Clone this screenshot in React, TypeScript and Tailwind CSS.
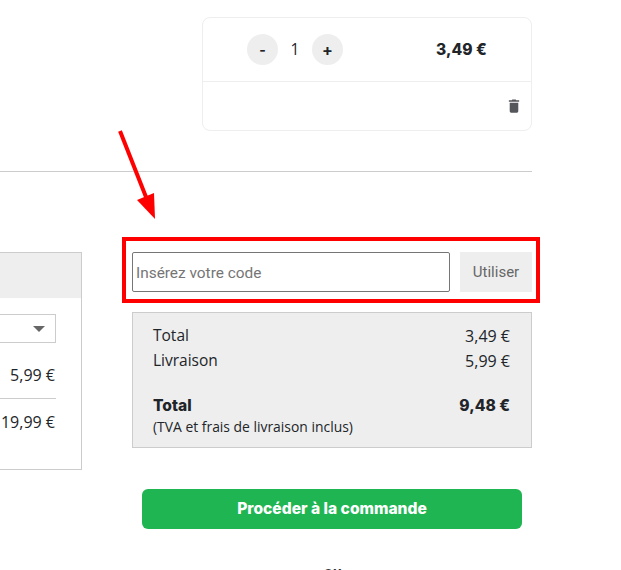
import React from 'react';

const App: React.FC = () => {
  return (
    <div className="relative w-[621px] h-[570px] overflow-hidden bg-white font-['Open_Sans',sans-serif] text-[#212529]">
      <div className="w-[532px] pt-[17px]">
        {/* cart item */}
        <div className="ml-[202px] w-[330px] h-[114px] border border-[#eeeeee] rounded-lg flex flex-col">
          <div className="h-[64px] border-b border-[#eeeeee] flex items-center pl-[44px]">
            <button className="w-[31px] h-[31px] rounded-full bg-[#eeeeee] flex items-center justify-center text-sm font-bold font-['Inter',sans-serif]">-</button>
            <span className="w-[34px] text-center text-[15.5px]">1</span>
            <button className="w-[31px] h-[31px] rounded-full bg-[#eeeeee] flex items-center justify-center text-base font-bold font-['Inter',sans-serif]">+</button>
            <span className="ml-[93px] text-[15.6px] font-extrabold font-['Inter',sans-serif]">3,49 €</span>
          </div>
          <div className="flex-1 flex justify-end pt-[17px] pr-[11px]">
            <svg width="12" height="14" viewBox="0 0 14 16" preserveAspectRatio="none" className="text-[#55565b]">
              <path fill="currentColor" d="M5 0.5h4l.7 1H13v1.6H1V1.5h3.3zM2 4.2h10V14a1.6 1.6 0 0 1-1.6 1.6H3.6A1.6 1.6 0 0 1 2 14z" />
            </svg>
          </div>
        </div>

        <div className="mt-[40px] border-t border-[#cccccc]" />

        <div className="mt-[80px] flex items-start">
          {/* shipping panel, cut off by the window */}
          <div className="w-[82px] h-[218px] border border-l-0 border-[#cccccc] text-base">
            <div className="h-[45px] bg-[#eeeeee]" />
            <div className="pr-[25px]">
              <div className="mt-[16px] h-[29px] border border-l-0 border-[#cccccc] flex items-center justify-end pr-[10px]">
                <span className="border-x-[6px] border-x-transparent border-t-[6px] border-t-[#666666]" />
              </div>
              <div className="h-[56px] border-b border-[#cccccc] pt-[21px] pr-px text-right leading-[22px]">5,99 €</div>
              <div className="pt-[12px] pr-px text-right leading-[22px] whitespace-nowrap">19,99 €</div>
            </div>
          </div>

          {/* coupon + totals */}
          <div className="ml-[50px] w-[400px]">
            <div className="flex gap-[10px]">
              <input
                readOnly
                placeholder="Insérez votre code"
                className="w-[318px] h-[40px] border border-[#767676] rounded-[2px] px-[3px] pt-[1px] text-[15.4px] font-['Roboto',sans-serif] placeholder:text-[#757575] outline-none"
              />
              <button className="w-[72px] h-[40px] bg-[#eeeeee] text-[15px] text-[#666666] font-['Roboto',sans-serif]">Utiliser</button>
            </div>

            <div className="mt-[20px] h-[136px] border border-[#cccccc] bg-[#eeeeee] pl-[20px] pr-[21px] pt-[10px] text-[15.5px]">
              <div className="flex justify-between h-[25px] items-center"><span>Total</span><span className="text-base">3,49 €</span></div>
              <div className="flex justify-between h-[25px] items-center"><span>Livraison</span><span className="text-base">5,99 €</span></div>
              <div className="mt-[20px] flex justify-between h-[25px] items-center font-['Inter',sans-serif] font-extrabold text-[15.6px]"><span>Total</span><span>9,48 €</span></div>
              <div className="text-[13.9px] leading-[18px]">(TVA et frais de livraison inclus)</div>
            </div>

            <button className="mt-[41px] ml-[10px] w-[380px] h-[40px] rounded-md bg-[#1fb553] text-white text-[15.6px] font-extrabold font-['Inter',sans-serif]">
              Procéder à la commande
            </button>
          </div>
        </div>
      </div>

      {/* annotation drawn over the page */}
      <div className="absolute left-[122px] top-[237px] w-[418px] h-[66px] border-4 border-[#ff0000]" />
      <svg className="absolute left-[110px] top-[125px]" width="50" height="100" viewBox="0 0 50 100">
        <path d="M10 6 L36 72" stroke="#ff0000" strokeWidth="4" fill="none" />
        <path d="M45 94 L27 75 L44 68 Z" fill="#ff0000" />
      </svg>

      {/* top of next section, mostly below the fold */}
      <div className="absolute left-[324px] top-[565px] text-[14px] leading-none font-bold text-[#333333]">ou</div>
    </div>
  );
};

export default App;
